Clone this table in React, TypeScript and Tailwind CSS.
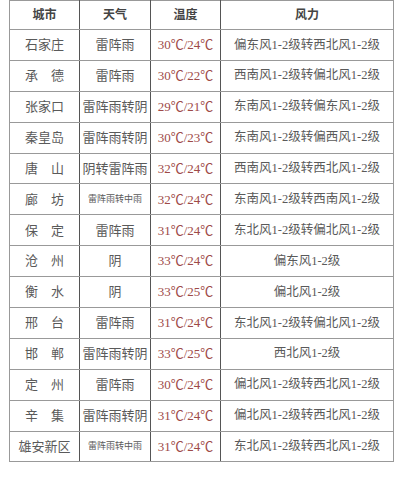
const rows: { city: string; weather: string; temp: string; wind: string; small?: boolean }[] = [
  { city: "石家庄", weather: "雷阵雨", temp: "30℃/24℃", wind: "偏东风1-2级转西北风1-2级" },
  { city: "承　德", weather: "雷阵雨", temp: "30℃/22℃", wind: "西南风1-2级转偏北风1-2级" },
  { city: "张家口", weather: "雷阵雨转阴", temp: "29℃/21℃", wind: "东南风1-2级转偏东风1-2级" },
  { city: "秦皇岛", weather: "雷阵雨转阴", temp: "30℃/23℃", wind: "东南风1-2级转偏西风1-2级" },
  { city: "唐　山", weather: "阴转雷阵雨", temp: "32℃/24℃", wind: "西南风1-2级转西北风1-2级" },
  { city: "廊　坊", weather: "雷阵雨转中雨", temp: "32℃/24℃", wind: "东南风1-2级转西南风1-2级", small: true },
  { city: "保　定", weather: "雷阵雨", temp: "31℃/24℃", wind: "东北风1-2级转偏北风1-2级" },
  { city: "沧　州", weather: "阴", temp: "33℃/24℃", wind: "偏东风1-2级" },
  { city: "衡　水", weather: "阴", temp: "33℃/25℃", wind: "偏北风1-2级" },
  { city: "邢　台", weather: "雷阵雨", temp: "31℃/24℃", wind: "东北风1-2级转偏北风1-2级" },
  { city: "邯　郸", weather: "雷阵雨转阴", temp: "33℃/25℃", wind: "西北风1-2级" },
  { city: "定　州", weather: "雷阵雨", temp: "30℃/24℃", wind: "偏北风1-2级转西北风1-2级" },
  { city: "辛　集", weather: "雷阵雨转阴", temp: "31℃/24℃", wind: "偏北风1-2级转西北风1-2级" },
  { city: "雄安新区", weather: "雷阵雨转中雨", temp: "31℃/24℃", wind: "东北风1-2级转西北风1-2级", small: true },
];

export default function App() {
  return (
    <div
      className="w-[400px] h-[480px] bg-white overflow-hidden"
      style={{ fontFamily: '"Liberation Serif", "Noto Sans CJK SC", serif' }}
    >
      <table className="ml-[9px] w-[384px] table-fixed border-collapse text-[13px] text-[#5a5a5a]">
        <colgroup>
          <col className="w-[70px]" />
          <col className="w-[71px]" />
          <col className="w-[70px]" />
          <col className="w-[173px]" />
        </colgroup>
        <thead>
          <tr className="h-[29px]">
            <th className="border border-[#999] border-r-[#555] font-bold text-[12px] text-[#444]">城市</th>
            <th className="border border-[#999] border-r-[#555] font-bold text-[12px] text-[#444]">天气</th>
            <th className="border border-[#999] border-r-[#555] font-bold text-[12px] text-[#444]">温度</th>
            <th className="border border-[#999] font-bold text-[12px] text-[#444]">风力</th>
          </tr>
        </thead>
        <tbody>
          {rows.map((r) => (
            <tr key={r.city} className="h-[30.9px]">
              <td className="border border-[#999] border-r-[#555] text-center whitespace-nowrap">{r.city}</td>
              <td
                className={
                  r.small
                    ? "border border-[#999] border-r-[#555] text-center whitespace-nowrap text-[9px]"
                    : "border border-[#999] border-r-[#555] text-center whitespace-nowrap"
                }
              >
                {r.weather}
              </td>
              <td className="border border-[#999] border-r-[#555] text-center whitespace-nowrap text-[#9e4a48]">{r.temp}</td>
              <td className="border border-[#999] text-center whitespace-nowrap text-[12.5px]">{r.wind}</td>
            </tr>
          ))}
        </tbody>
      </table>
    </div>
  );
}
